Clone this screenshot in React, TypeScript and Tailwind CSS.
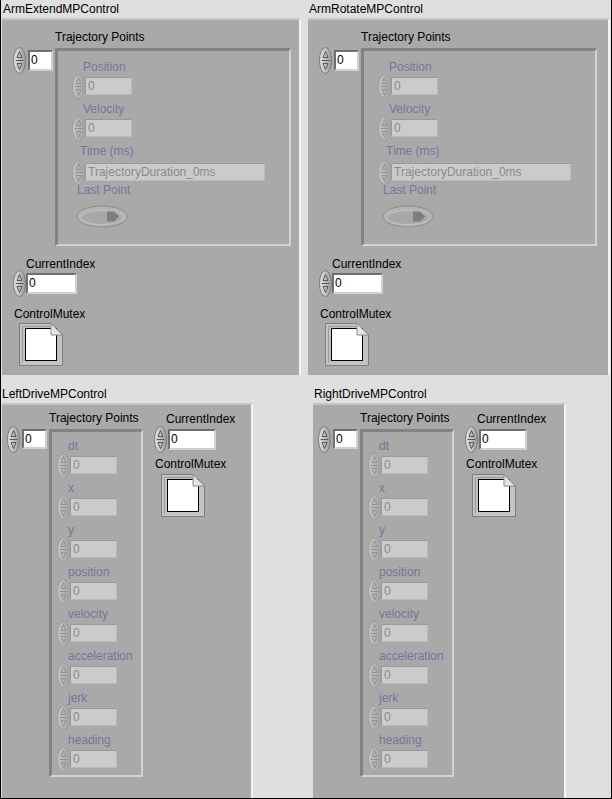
import { useId } from "react";

const DRIVE_FIELDS = ["dt", "x", "y", "position", "velocity", "acceleration", "jerk", "heading"];

function Incrementer({ disabled = false, h = 25 }: { disabled?: boolean; h?: number }) {
  const id = "g" + useId().replace(/[^a-zA-Z0-9]/g, "");
  const stroke = disabled ? "#9d9d9d" : "#7a7a7a";
  const arrow = disabled ? "#8f8f8f" : "#4c4c4c";
  const mid = h / 2;
  return (
    <svg width="13" height={h} viewBox={`0 0 13 ${h}`} className="shrink-0">
      <defs>
        <linearGradient id={id} x1="0" x2="1" y1="0" y2="0">
          <stop offset="0" stopColor={disabled ? "#c6c6c6" : "#e6e6e6"} />
          <stop offset="1" stopColor={disabled ? "#a3a3a3" : "#9a9a9a"} />
        </linearGradient>
      </defs>
      <ellipse cx="6.5" cy={mid} rx="6" ry={mid - 0.5} fill={`url(#${id})`} stroke={stroke} />
      <path d={`M4 ${mid - 3} L6.5 ${mid - 9} L9 ${mid - 3} Z`} fill="none" stroke={arrow} strokeWidth="0.9" />
      <path d={`M2.5 ${mid} H10.5`} stroke={arrow} strokeWidth="0.9" />
      <path d={`M4 ${mid + 3} L6.5 ${mid + 9} L9 ${mid + 3} Z`} fill="none" stroke={arrow} strokeWidth="0.9" />
    </svg>
  );
}

function Toggle() {
  return (
    <svg width="52" height="23" viewBox="0 0 52 23">
      <ellipse cx="26" cy="11.5" rx="25" ry="10.5" fill="#b4b4b4" stroke="#8c8c8c" />
      <ellipse cx="26" cy="12.5" rx="21" ry="7" fill="#a8a8a8" stroke="#c2c2c2" />
      <path d="M31 6.5 H38 L43 11.5 L38 16.5 H31 Z" fill="#7d7d7d" />
    </svg>
  );
}

function Mutex() {
  return (
    <svg width="44" height="43" viewBox="0 0 44 43">
      <path d="M0.5 0.5 H32 L43.5 12 V42.5 H0.5 Z" fill="#c3c3c3" stroke="#7e7e7e" />
      <path d="M3.5 39.5 V3.5 H31" fill="none" stroke="#9a9a9a" />
      <rect x="6.5" y="5.5" width="31" height="32" fill="#ffffff" stroke="#000000" />
      <path d="M32 0.5 V12 H43.5 Z" fill="#e4e4e4" stroke="#8a8a8a" />
    </svg>
  );
}

function Label({ text, className = "" }: { text: string; className?: string }) {
  return <div className={`h-[16px] leading-[16px] whitespace-nowrap ${className}`}>{text}</div>;
}

function NumBox({ width }: { width: string }) {
  return (
    <div
      className={`${width} h-[21px] bg-white border-2 border-t-[#6f6f6f] border-l-[#6f6f6f] border-r-[#d0d0d0] border-b-[#d0d0d0] pl-[1px] leading-[17px] text-black`}
    >
      0
    </div>
  );
}

function DisabledField({ label, first = false }: { label: string; first?: boolean }) {
  return (
    <div className={first ? "" : "mt-[6px]"}>
      <Label text={label} className="ml-[11px] text-[#76769a]" />
      <div className="mt-[2px] flex items-center h-[18px]">
        <Incrementer disabled />
        <div className="w-[47px] h-[18px] bg-[#cbcbcb] border border-t-[#999999] border-l-[#999999] border-r-[#bababa] border-b-[#bababa] pl-[2px] leading-[16px] text-[#8a8a8a]">
          0
        </div>
      </div>
    </div>
  );
}

function ArmCluster() {
  return (
    <div className="h-[357px] bg-[#a9a9a9] border-t-2 border-t-[#c4c4c4] border-r-2 border-r-[#f4f4f4] pt-[9px]">
      <div className="flex pl-[11px]">
        <div className="mt-[21px] h-[21px] flex items-center">
          <Incrementer h={27} />
          <div className="ml-[2px]">
            <NumBox width="w-[25px]" />
          </div>
        </div>
        <div className="ml-[2px]">
          <Label text="Trajectory Points" />
          <div className="mt-[3px] w-[236px] h-[198px] border-t-[3px] border-l-[3px] border-t-[#838383] border-l-[#838383] border-r-2 border-b-2 border-r-[#d2d2d2] border-b-[#d2d2d2] pt-[8px] pl-[14px]">
            <DisabledField label="Position" first />
            <DisabledField label="Velocity" />
            <Label text="Time (ms)" className="mt-[6px] ml-[8px] text-[#76769a]" />
            <div className="mt-[4px] flex items-center h-[18px]">
              <Incrementer disabled />
              <div className="w-[180px] h-[18px] bg-[#cbcbcb] border border-t-[#999999] border-l-[#999999] border-r-[#bababa] border-b-[#bababa] pl-[2px] leading-[16px] text-[#8a8a8a]">
                TrajectoryDuration_0ms
              </div>
            </div>
            <Label text="Last Point" className="mt-[1px] ml-[5px] text-[#76769a]" />
            <div className="mt-[7px] ml-[4px]">
              <Toggle />
            </div>
          </div>
        </div>
      </div>
      <Label text="CurrentIndex" className="mt-[10px] ml-[24px]" />
      <div className="mt-[1px] ml-[11px] h-[21px] flex items-center">
        <Incrementer h={27} />
        <NumBox width="w-[51px]" />
      </div>
      <Label text="ControlMutex" className="mt-[12px] ml-[12px]" />
      <div className="mt-[1px] ml-[17px]">
        <Mutex />
      </div>
    </div>
  );
}

function DriveCluster() {
  return (
    <div className="flex-1 bg-[#a9a9a9] border-t-2 border-t-[#c4c4c4] border-r-2 border-r-[#f4f4f4] pt-[5px] pl-[5px] flex">
      <div className="mt-[19px] h-[20px] flex items-center">
        <Incrementer h={27} />
        <div className="ml-[2px]">
          <div className="w-[25px] h-[20px] bg-white border-2 border-t-[#6f6f6f] border-l-[#6f6f6f] border-r-[#d0d0d0] border-b-[#d0d0d0] pl-[1px] leading-[16px] text-black">
            0
          </div>
        </div>
      </div>
      <div className="ml-[2px]">
        <Label text="Trajectory Points" />
        <div className="mt-[3px] w-[94px] h-[348px] border-t-[3px] border-l-[3px] border-t-[#838383] border-l-[#838383] border-r-2 border-b-2 border-r-[#d2d2d2] border-b-[#d2d2d2] pt-[6px] pl-[5px]">
          {DRIVE_FIELDS.map((f, i) => (
            <DisabledField key={f} label={f} first={i === 0} />
          ))}
        </div>
      </div>
      <div className="ml-[11px] mt-[1px]">
        <Label text="CurrentIndex" className="ml-[12px]" />
        <div className="mt-[2px] h-[21px] flex items-center">
          <Incrementer h={27} />
          <div className="ml-[1px]">
            <NumBox width="w-[48px]" />
          </div>
        </div>
        <Label text="ControlMutex" className="mt-[6px] ml-[1px]" />
        <div className="mt-[2px] ml-[7px]">
          <Mutex />
        </div>
      </div>
    </div>
  );
}

export default function App() {
  return (
    <div className="w-[612px] h-[799px] bg-[#dfdfdf] border-x border-b border-black flex flex-col font-['Liberation_Sans',Arial,sans-serif] text-[12px] text-black">
      <div className="flex">
        <div className="ml-[1px] w-[299px]">
          <div className="h-[18px] pt-[1px] pl-[1px]">
            <Label text="ArmExtendMPControl" />
          </div>
          <ArmCluster />
        </div>
        <div className="ml-[7px] w-[302px]">
          <div className="h-[18px] pt-[1px] pl-[1px]">
            <Label text="ArmRotateMPControl" />
          </div>
          <ArmCluster />
        </div>
      </div>
      <div className="flex flex-1 mt-[11px]">
        <div className="ml-[1px] w-[251px] flex flex-col">
          <div className="h-[17px]">
            <Label text="LeftDriveMPControl" />
          </div>
          <DriveCluster />
        </div>
        <div className="ml-[60px] w-[253px] flex flex-col">
          <div className="h-[17px] pl-[1px]">
            <Label text="RightDriveMPControl" />
          </div>
          <DriveCluster />
        </div>
      </div>
    </div>
  );
}
